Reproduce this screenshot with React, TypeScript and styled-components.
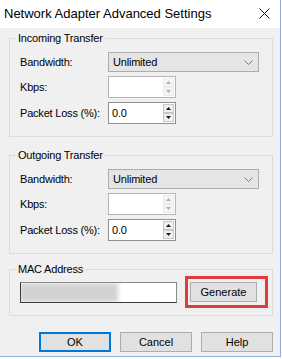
import React from "react"
import styled, { createGlobalStyle } from "styled-components"

const Global = createGlobalStyle`
    html, body {
        margin:0;
        padding:0;
        background:#ffffff;
    }
    * {
        box-sizing:border-box;
    }
`
const Window = styled.div`
    width:281px;
    height:357px;
    background:#f0f0f0;
    border-right:1px solid #8ab2dc;
    border-bottom:1px solid #8ab2dc;
    font-family:"Liberation Sans", Arial, sans-serif;
    font-size:11px;
    letter-spacing:-0.2px;
    color:#000;
    display:flex;
    flex-direction:column;
`
const TitleBar = styled.div`
    height:28px;
    background:#ffffff;
    display:flex;
    align-items:center;
    justify-content:space-between;
    padding:0 10px 1px 4px;
    font-size:13px;
    letter-spacing:0;
`
const Body = styled.div`
    flex:1;
    display:flex;
    flex-direction:column;
    padding:3px 7px 4px 9px;
`
const Group = styled.fieldset<{gap?:number}>`
    margin:${p=>p.gap ?? 0}px 0 0 0;
    padding:0;
    min-width:0;
    border:1px solid #dcdcdc;
`
const Legend = styled.legend`
    margin-left:6px;
    padding:0 2px;
    line-height:14px;
    font-size:11px;
`
const FieldGrid = styled.div`
    display:grid;
    grid-template-columns:88px 151px;
    grid-auto-rows:auto;
    row-gap:4px;
    align-items:center;
    padding:7px 0 12px 10px;
`
const Label = styled.span`
    white-space:nowrap;
`
const Select = styled.div`
    height:20px;
    background:#e5e5e5;
    border:1px solid #acacac;
    display:flex;
    align-items:center;
    justify-content:space-between;
    padding:0 5px 0 4px;
`
const SpinBox = styled.div<{disabled?:boolean}>`
    width:68px;
    height:22px;
    background:#ffffff;
    border:1px solid ${p=>p.disabled ? "#b4b4b4" : "#8f8f8f"};
    display:flex;
    align-items:stretch;
    padding:1px 1px 1px 0;
`
const SpinValue = styled.span`
    flex:1;
    display:flex;
    align-items:center;
    padding-left:3px;
    font-size:11px;
`
const SpinColumn = styled.div`
    width:11px;
    display:flex;
    flex-direction:column;
    gap:0;
`
const SpinButton = styled.div<{disabled?:boolean}>`
    flex:1;
    display:flex;
    align-items:center;
    justify-content:center;
    background:${p=>p.disabled ? "#f4f4f4" : "#f0f0f0"};
    border:1px solid ${p=>p.disabled ? "#ebebeb" : "#c8c8c8"};
    color:${p=>p.disabled ? "#b0b0b0" : "#1a1a1a"};
`
const MacRow = styled.div`
    display:flex;
    align-items:center;
    gap:8px;
    padding:0 4px 7px 10px;
`
const MacInput = styled.div`
    width:157px;
    height:21px;
    background:#ffffff;
    border:1px solid #8a8a8a;
    border-left-color:#3c3c3c;
    border-bottom-color:#3c3c3c;
    overflow:hidden;
    position:relative;
`
const Redacted = styled.span`
    display:block;
    width:98px;
    height:19px;
    background:#d2d2d2;
    filter:blur(2px);
    margin-left:-1px;
`
const Highlight = styled.div`
    border:3px solid #e23b3b;
    padding:3px 8px 3px 2px;
`
const Button = styled.div<{primary?:boolean}>`
    width:${p=>p.primary ? "72px" : "72px"};
    height:20px;
    background:#e1e1e1;
    border:${p=>p.primary ? "2px solid #0078d7" : "1px solid #adadad"};
    display:flex;
    align-items:center;
    justify-content:center;
    letter-spacing:0;
`
const GenerateButton = styled(Button)`
    width:67px;
`
const ButtonRow = styled.div`
    display:flex;
    justify-content:flex-end;
    gap:9px;
    margin-top:16px;
`

const Chevron = () => <svg width="9" height="5" viewBox="0 0 9 5">
    <path d="M0.5 0.5 L4.5 4.5 L8.5 0.5" fill="none" stroke="#7a7a7a" strokeWidth="1"/>
</svg>

const Arrow = ({down}:{down?:boolean}) => <svg width="5" height="3" viewBox="0 0 5 3">
    {down ? <path d="M0 0 H5 L2.5 3 Z" fill="currentColor"/> : <path d="M0 3 H5 L2.5 0 Z" fill="currentColor"/>}
</svg>

const CloseIcon = () => <svg width="11" height="11" viewBox="0 0 11 11">
    <path d="M0.5 0.5 L10.5 10.5 M10.5 0.5 L0.5 10.5" stroke="#1a1a1a" strokeWidth="1"/>
</svg>

const Spinner = ({value, disabled}:{value:string, disabled?:boolean}) => <SpinBox disabled={disabled}>
    <SpinValue>{value}</SpinValue>
    <SpinColumn>
        <SpinButton disabled={disabled}><Arrow/></SpinButton>
        <SpinButton disabled={disabled}><Arrow down/></SpinButton>
    </SpinColumn>
</SpinBox>

const TransferGroup = ({title, gap}:{title:string, gap?:number}) => <Group gap={gap}>
    <Legend>{title}</Legend>
    <FieldGrid>
        <Label>Bandwidth:</Label>
        <Select><span>Unlimited</span><Chevron/></Select>
        <Label>Kbps:</Label>
        <Spinner value="" disabled/>
        <Label>Packet Loss (%):</Label>
        <Spinner value="0.0"/>
    </FieldGrid>
</Group>

export default function App() {
    return <>
        <Global/>
        <Window>
            <TitleBar>
                <span>Network Adapter Advanced Settings</span>
                <CloseIcon/>
            </TitleBar>
            <Body>
                <TransferGroup title="Incoming Transfer"/>
                <TransferGroup title="Outgoing Transfer" gap={11}/>
                <Group gap={8}>
                    <Legend>MAC Address</Legend>
                    <MacRow>
                        <MacInput><Redacted/></MacInput>
                        <Highlight>
                            <GenerateButton>Generate</GenerateButton>
                        </Highlight>
                    </MacRow>
                </Group>
                <ButtonRow>
                    <Button primary>OK</Button>
                    <Button>Cancel</Button>
                    <Button>Help</Button>
                </ButtonRow>
            </Body>
        </Window>
    </>
}
